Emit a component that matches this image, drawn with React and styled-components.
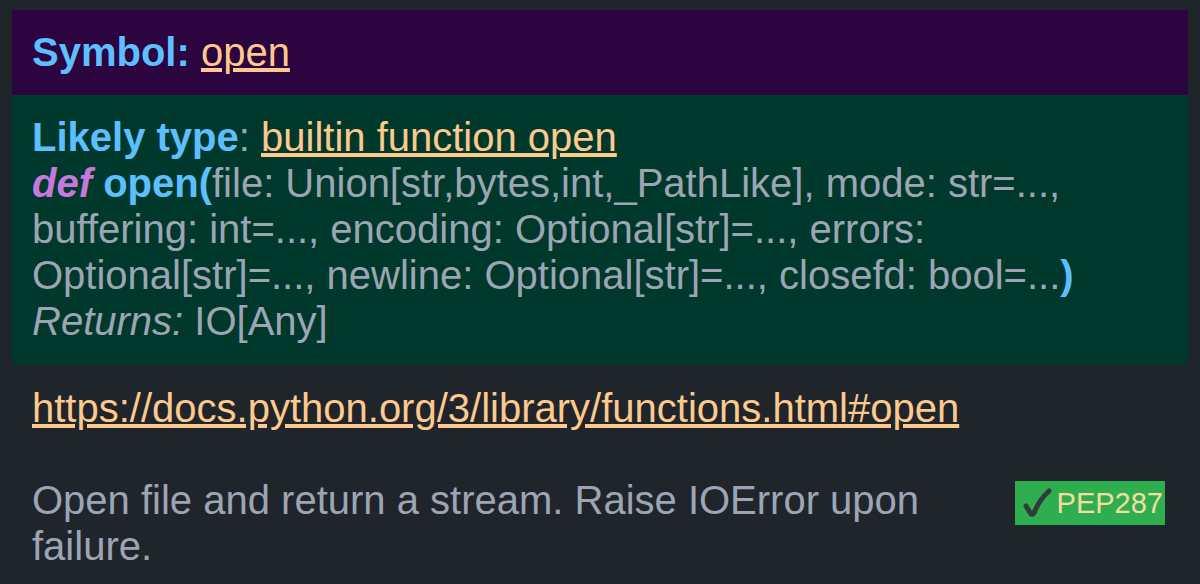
import React from 'react';
import styled, { createGlobalStyle } from 'styled-components';

const Global = createGlobalStyle`
  html, body {
    margin: 0;
    background: #20252c;
  }
`;

const Popup = styled.div`
  width: 1200px;
  height: 584px;
  overflow: hidden;
  box-sizing: border-box;
  padding: 10px 12px 0;
  background: #20252c;
  color: #9da5b4;
  font-family: "Liberation Sans", Arial, sans-serif;
  font-size: 40px;
  line-height: 46px;
`;

const Header = styled.div`
  height: 85px;
  box-sizing: border-box;
  padding: 19px 20px;
  background: #2c0440;
`;

const TypeBox = styled.div`
  height: 270px;
  box-sizing: border-box;
  padding: 19px 20px;
  background: #00392c;
`;

const Label = styled.b`
  color: #5cbfff;
`;

const Keyword = styled.b`
  color: #c678dd;
  font-style: italic;
`;

const Link = styled.a`
  color: #fdc98c;
  text-decoration: underline;
`;

const Body = styled.div`
  padding: 20px 20px 0;
`;

const Doc = styled.div`
  display: flex;
  justify-content: space-between;
  align-items: flex-start;
  margin-top: 46px;
`;

const DocText = styled.div`
  flex: 1;
`;

const Badge = styled.div`
  display: flex;
  align-items: center;
  flex-shrink: 0;
  gap: 5px;
  margin: 4px 3px 0 0;
  height: 44px;
  padding: 0 2px 0 8px;
  background: #2eae4e;
  color: #f5dba0;
  font-size: 29px;
`;

const Check = () => (
  <svg width="29" height="30" viewBox="0 0 29 30" fill="none">
    <path
      d="M3 18 L8 26 Q10 27 11 25 Q16 12 26 3"
      stroke="#333a3a"
      strokeWidth="5"
      strokeLinecap="round"
      strokeLinejoin="round"
    />
  </svg>
);

export default function App() {
  return (
    <Popup>
      <Global />
      <Header>
        <Label>Symbol:</Label> <Link>open</Link>
      </Header>
      <TypeBox>
        <Label>Likely type</Label>: <Link>builtin function open</Link>
        <br />
        <Keyword>def</Keyword> <Label>open(</Label>file: Union[str,bytes,int,_PathLike], mode: str=...,
        buffering: int=..., encoding: Optional[str]=..., errors:
        Optional[str]=..., newline: Optional[str]=..., closefd: bool=...<Label>)</Label>
        <br />
        <i>Returns:</i> IO[Any]
      </TypeBox>
      <Body>
        <Link>https://docs.python.org/3/library/functions.html#open</Link>
        <Doc>
          <DocText>Open file and return a stream. Raise IOError upon failure.</DocText>
          <Badge><Check />PEP287</Badge>
        </Doc>
      </Body>
    </Popup>
  );
}
